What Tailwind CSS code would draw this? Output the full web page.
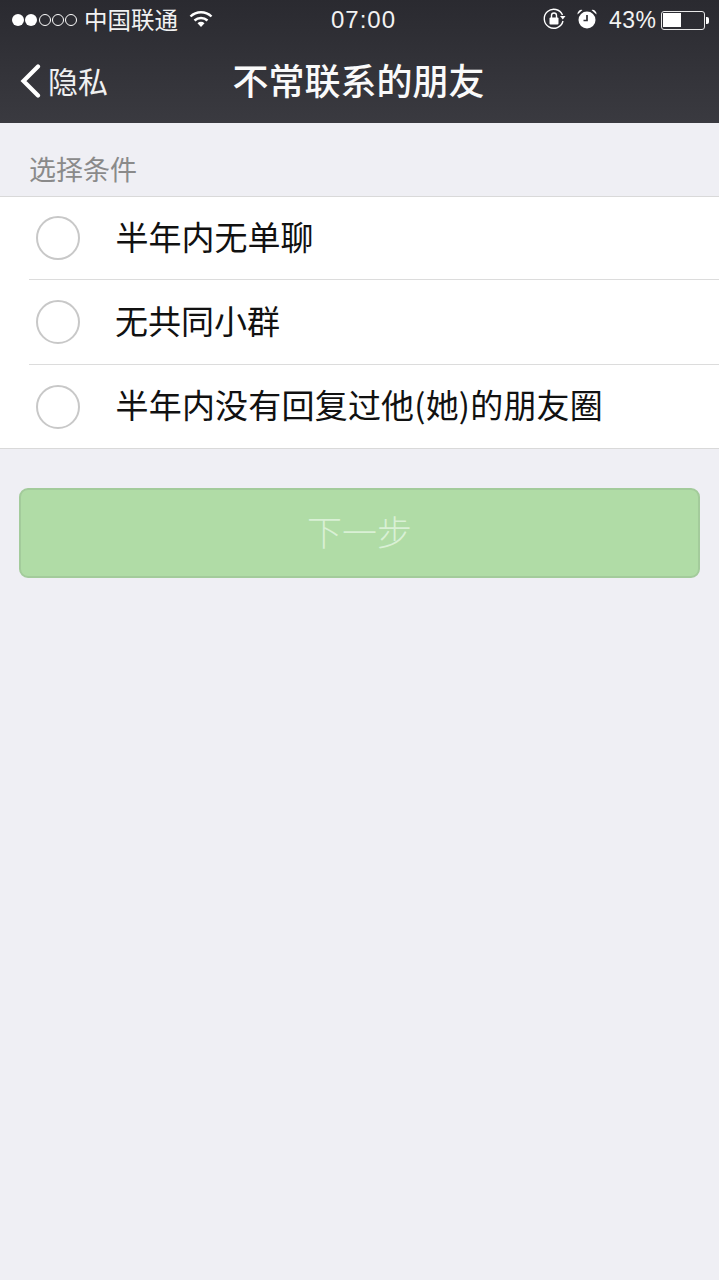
<!doctype html>
<html lang="zh-CN"><head><meta charset="utf-8"><script src="https://cdn.jsdelivr.net/npm/@tailwindcss/browser@4"></script></head>
<body class="m-0">
<div class="w-[719px] h-[1280px] overflow-hidden bg-[#efeff4] flex flex-col font-['Noto_Sans_CJK_SC',sans-serif]">
  <header class="h-[123px] shrink-0 bg-gradient-to-b from-[#2a2a30] to-[#3a3a40] text-white flex flex-col">
    <div class="h-[40px] flex items-center relative text-[#f2f2f2]">
      <div class="flex items-center gap-[1.25px] ml-[12px]">
        <span class="w-[12px] h-[12px] rounded-full bg-white"></span>
        <span class="w-[12px] h-[12px] rounded-full bg-white"></span>
        <span class="w-[12px] h-[12px] rounded-full border border-white"></span>
        <span class="w-[12px] h-[12px] rounded-full border border-white"></span>
        <span class="w-[12px] h-[12px] rounded-full border border-white"></span>
      </div>
      <span class="ml-[7px] -mt-[2px] text-[23.5px] leading-[40px] font-normal">中国联通</span>
      <svg class="ml-[11px] -mt-[3px]" width="24" height="18" viewBox="0 0 24 18" fill="none" stroke="#fff" stroke-width="2.4"><path d="M1.5 6.5a15 15 0 0 1 21 0"/><path d="M5.5 10.5a9.5 9.5 0 0 1 13 0"/><path d="M12 17l-3.5-3.8a5 5 0 0 1 7 0z" fill="#fff" stroke="none"/></svg>
      <span class="absolute left-[331px] top-[0px] text-[24px] leading-[40px] font-['Liberation_Sans'] tracking-[1px]">07:00</span>
      <div class="absolute left-[543px] top-0 h-[40px] flex items-center">
        <svg width="24" height="24" viewBox="0 0 24 24" fill="none" stroke="#fff" stroke-width="1.4" class="-mt-[2px]"><path d="M19.5 8A9.5 9.5 0 1 0 20 14"/><path d="M17 9l5.500 0-2.700 3.500z" fill="#fff" stroke="none"/><rect x="6.500" y="10.500" width="9" height="7" rx="1" fill="#fff" stroke="none"/><path d="M8.500 11V8.500a2.500 2.500 0 0 1 5 0V11"/></svg>
        <svg class="ml-[9px] -mt-[2px]" width="22" height="22" viewBox="0 0 22 22" fill="none"><circle cx="11" cy="12" r="8.500" fill="#fff"/><path d="M11 7v5.500H7.500" stroke="#2e2e34" stroke-width="1.700"/><path d="M1.500 6.500a4 4 0 0 1 5-4.500zM20.500 6.500a4 4 0 0 0-5-4.500z" fill="#fff"/></svg>
        <span class="ml-[11px] text-[23px] leading-[40px] font-['Liberation_Sans'] tracking-[0.5px]">43%</span>
        <div class="ml-[4px] w-[44px] h-[19px] rounded-[3px] border border-[#e8e8e8] p-[1.5px]"><div class="w-[18px] h-full bg-white"></div></div>
        <span class="w-[3px] h-[7px] bg-white rounded-r-[2px] ml-[1px]"></span>
      </div>
    </div>
    <div class="relative h-[83px] flex items-center justify-center">
      <div class="absolute left-[20px] top-[1px] h-[80px] flex items-center">
        <svg width="21" height="34" viewBox="0 0 21 34" fill="none" stroke="#fff" stroke-width="4.200" stroke-linecap="round"><path d="M18 2.500 3.500 17 18 31.500"/></svg>
        <span class="ml-[7px] -mt-[2px] text-[30px] leading-none text-[#f0f0f0] font-normal">隐私</span>
      </div>
      <h1 class="text-[36px] leading-none font-medium -mt-[5px] -ml-[2px] text-[#fafafa]">不常联系的朋友</h1>
    </div>
  </header>
  <div class="h-[73px] shrink-0 pl-[29px] pt-[29px] text-[27px] leading-[33px] text-[#8a8a8a] font-normal">选择条件</div>
  <ul class="bg-white border-y border-[#d9d9d9]">
    <li class="h-[82px] flex items-center pl-[36px] text-[33px] text-[#111]">
      <span class="w-[43.5px] h-[44px] rounded-full border-2 border-[#c8c8c8] shrink-0"></span>
      <span class="ml-[36px] -mt-[4px] leading-none font-normal">半年内无单聊</span>
    </li>
    <li class="ml-[29px] h-px bg-[#dcdcdc]"></li>
    <li class="h-[84px] flex items-center pl-[36px] text-[33px] text-[#111]">
      <span class="w-[43.5px] h-[44px] rounded-full border-2 border-[#c8c8c8] shrink-0"></span>
      <span class="ml-[35.5px] -mt-[4px] leading-none">无共同小群</span>
    </li>
    <li class="ml-[29px] h-px bg-[#dcdcdc]"></li>
    <li class="h-[83px] flex items-center pl-[36px] text-[33px] text-[#111]">
      <span class="w-[43.5px] h-[44px] rounded-full border-2 border-[#c8c8c8] shrink-0"></span>
      <span class="ml-[36px] -mt-[4px] leading-none whitespace-nowrap tracking-[0.2px]">半年内没有回复过他(她)的朋友圈</span>
    </li>
  </ul>
  <button class="mt-[39px] mx-[19px] h-[90px] rounded-[9px] bg-[#b0dca6] border-2 border-[#a3cb9b] text-[#d9f0d5] text-[35px] leading-none font-light flex items-center justify-center shrink-0"><span class="-mt-[5px]">下一步</span></button>
</div>
</body></html>
